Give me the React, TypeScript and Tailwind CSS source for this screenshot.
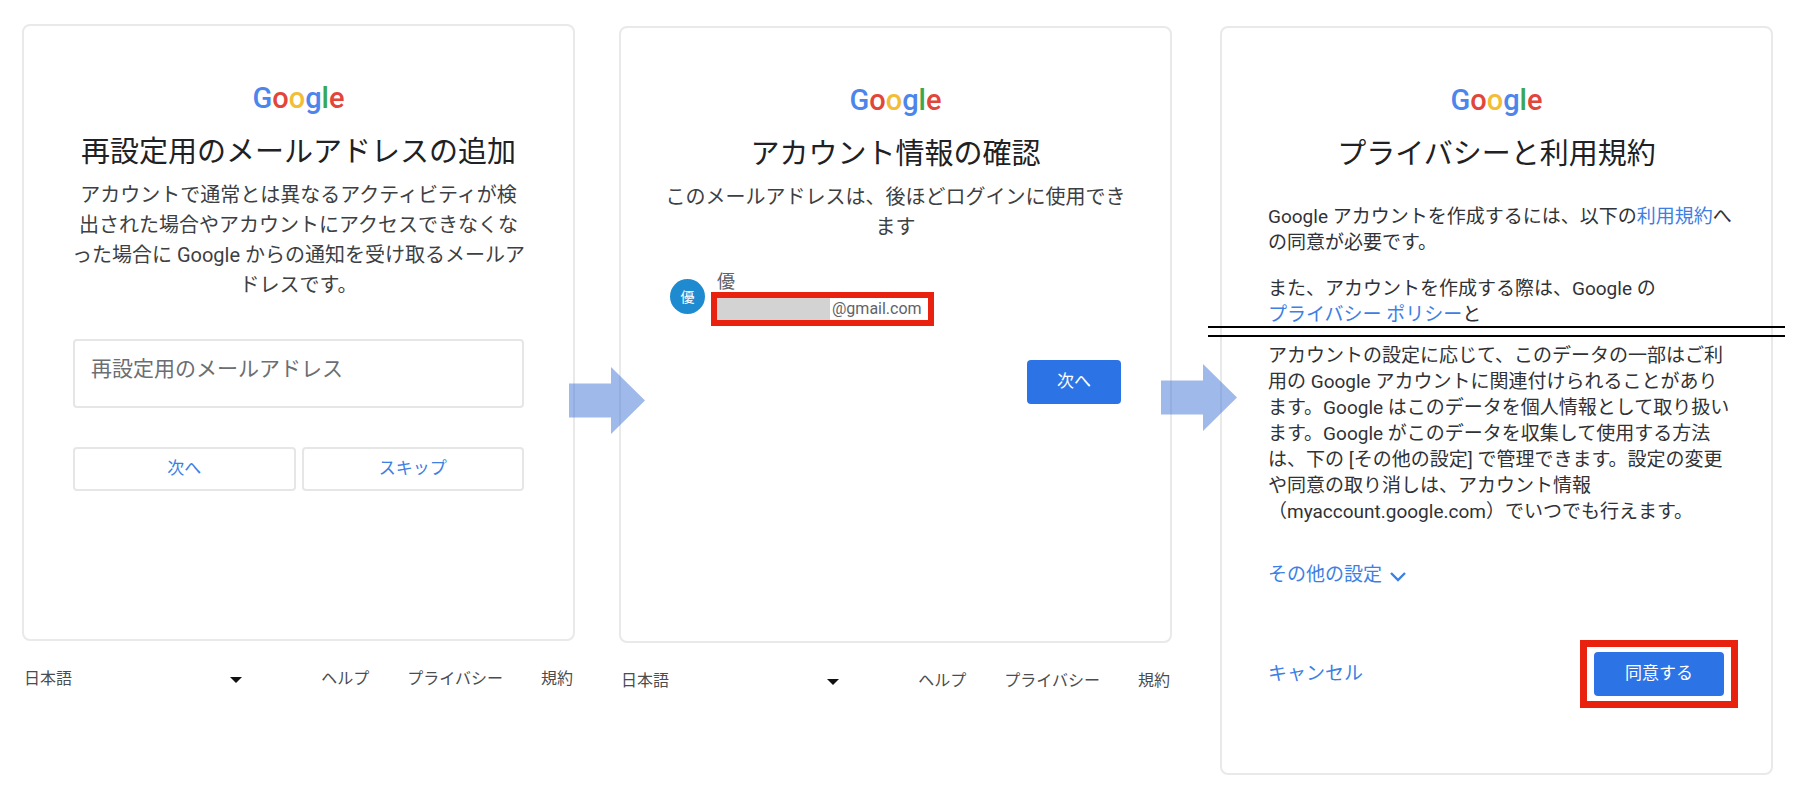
import type { ReactNode } from "react";

interface StepCardProps {
  title: string;
  className?: string;
  children: ReactNode;
}

const footerLinks = ["ヘルプ", "プライバシー", "規約"] as const;

const GoogleLogo = () => (
  <div className="text-center text-[29px] leading-9 font-medium" aria-label="Google">
    <span className="text-[#4c85ec]">G</span>
    <span className="text-[#e2453a]">o</span>
    <span className="text-[#f3bd35]">o</span>
    <span className="text-[#4c85ec]">g</span>
    <span className="text-[#3aa757]">l</span>
    <span className="text-[#e2453a]">e</span>
  </div>
);

const StepCard = ({ title, className = "", children }: StepCardProps) => (
  <div className={`rounded-lg border-2 border-[#e9e9e9] pt-[54px] ${className}`}>
    <GoogleLogo />
    <h1 className="mt-4 text-center text-[29px] leading-10 text-[#202124] whitespace-nowrap">{title}</h1>
    {children}
  </div>
);

const StepFooter = () => (
  <footer className="mt-6 flex items-center justify-between px-0.5 text-base leading-7 text-[#4a4c50]">
    <div className="relative w-[218px]">
      <select aria-label="言語" className="block h-7 w-full appearance-none bg-transparent outline-none">
        <option>日本語</option>
      </select>
      <svg className="pointer-events-none absolute right-0 top-3 h-[6px] w-3" viewBox="0 0 12 6">
        <path d="M0 0h12L6 6z" fill="#111" />
      </svg>
    </div>
    <nav className="flex gap-[38px]">
      {footerLinks.map((link) => (
        <a key={link} href="#">
          {link}
        </a>
      ))}
    </nav>
  </footer>
);

const StepArrow = ({ className }: { className: string }) => (
  <svg className={`absolute h-[67px] w-[76px] ${className}`} viewBox="0 0 76 67">
    <path d="M0 16.5h42V0l34 33.5L42 67V50.5H0z" fill="#3f73d5" fillOpacity="0.5" />
  </svg>
);

const RecoveryEmailStep = () => (
  <section className="min-w-0 flex-1 pt-6">
    <StepCard title="再設定用のメールアドレスの追加" className="min-h-[617px] px-[49px]">
      <p className="-mx-2 mt-2 text-center text-xl leading-[30px] text-[#3c4043]">
        アカウントで通常とは異なるアクティビティが検
        <br />
        出された場合やアカウントにアクセスできなくな
        <br />
        った場合に Google からの通知を受け取るメールア
        <br />
        ドレスです。
      </p>
      <input
        type="email"
        aria-label="再設定用のメールアドレス"
        placeholder="再設定用のメールアドレス"
        className="mt-[39px] h-[69px] w-full rounded border-2 border-[#e6e6e6] px-4 pb-[10px] text-[21px] outline-none placeholder:text-[#6b6e72]"
      />
      <div className="mt-[39px] flex gap-[6px] text-[17px] text-[#3d80e4]">
        <button className="h-11 flex-1 rounded border-2 border-[#e6e6e6]">次へ</button>
        <button className="h-11 flex-1 rounded border-2 border-[#e6e6e6]">スキップ</button>
      </div>
    </StepCard>
    <StepFooter />
  </section>
);

const ConfirmStep = () => (
  <section className="min-w-0 flex-1 pt-[26px]">
    <StepCard title="アカウント情報の確認" className="min-h-[617px] px-[49px]">
      <p className="-mx-2 mt-2 text-center text-xl leading-[30px] text-[#3c4043]">
        このメールアドレスは、後ほどログインに使用でき
        <br />
        ます
      </p>
      <div className="mt-[30px] flex items-start gap-[6px]">
        <div className="mt-[7px] flex size-[35px] items-center justify-center rounded-full bg-[#1e8bd0] text-sm text-white">
          優
        </div>
        <div>
          <div className="pl-[6px] text-lg leading-5 text-[#5f6368]">優</div>
          <div className="flex h-[34px] w-[223px] items-center border-[6px] border-[#e8220e] text-base leading-5 text-[#5f6368]">
            {/* hidden part of the address */}
            <span className="h-full w-[113px] bg-[#d3d3d3]"></span>
            <span className="pl-[2px]">@gmail.com</span>
          </div>
        </div>
      </div>
      <div className="mt-[34px] flex justify-end">
        <button className="h-11 w-[94px] rounded bg-[#2c74e6] text-[17px] text-white">次へ</button>
      </div>
    </StepCard>
    <StepFooter />
  </section>
);

const TermsStep = () => (
  <section className="min-w-0 flex-1 pt-[26px]">
    <StepCard title="プライバシーと利用規約" className="min-h-[749px] px-[46px]">
      <div className="text-[19px] leading-[26px] whitespace-nowrap text-[#303236]">
        <p className="mt-[30px]">
          Google アカウントを作成するには、以下の
          <a href="#" className="text-[#3d80e4]">
            利用規約
          </a>
          へ
          <br />
          の同意が必要です。
        </p>
        <p className="mt-5">
          また、アカウントを作成する際は、Google の
          <br />
          <a href="#" className="text-[#3d80e4]">
            プライバシー ポリシー
          </a>
          と
        </p>
        {/* cut line, the middle of the terms is left out */}
        <div className="-mx-[60px] -mt-0.5 h-[11px] border-y-2 border-black"></div>
        <p className="mt-[6px]">
          アカウントの設定に応じて、このデータの一部はご利
          <br />
          用の Google アカウントに関連付けられることがあり
          <br />
          ます。Google はこのデータを個人情報として取り扱い
          <br />
          ます。Google がこのデータを収集して使用する方法
          <br />
          は、下の [その他の設定] で管理できます。設定の変更
          <br />
          や同意の取り消しは、アカウント情報
          <br />
          （myaccount.google.com）でいつでも行えます。
        </p>
        <button className="mt-[37px] flex items-center gap-2 text-[#3d80e4]">
          その他の設定
          <svg className="mt-1 h-[10px] w-4" viewBox="0 0 16 10" fill="none" stroke="currentColor" strokeWidth="2.4">
            <path d="M1 1l7 7 7-7" />
          </svg>
        </button>
      </div>
      <div className="-mr-[13px] mt-[52px] flex items-center justify-between">
        <button className="text-[19px] leading-[26px] text-[#3d80e4]">キャンセル</button>
        <div className="border-[7px] border-[#e8220e] px-[7px] py-[5px]">
          <button className="block h-11 w-[130px] rounded bg-[#2c74e6] text-[17px] text-white">同意する</button>
        </div>
      </div>
    </StepCard>
  </section>
);

const App = () => {
  return (
    <main className="flex min-h-screen bg-white pl-[22px] pr-[27px] font-[Roboto,'Noto_Sans_CJK_JP',sans-serif]">
      <RecoveryEmailStep />
      <div className="relative w-11">
        <StepArrow className="-left-[6px] top-[367px]" />
      </div>
      <ConfirmStep />
      <div className="relative w-12">
        <StepArrow className="-left-[11px] top-[364px]" />
      </div>
      <TermsStep />
    </main>
  );
};

export default App;
